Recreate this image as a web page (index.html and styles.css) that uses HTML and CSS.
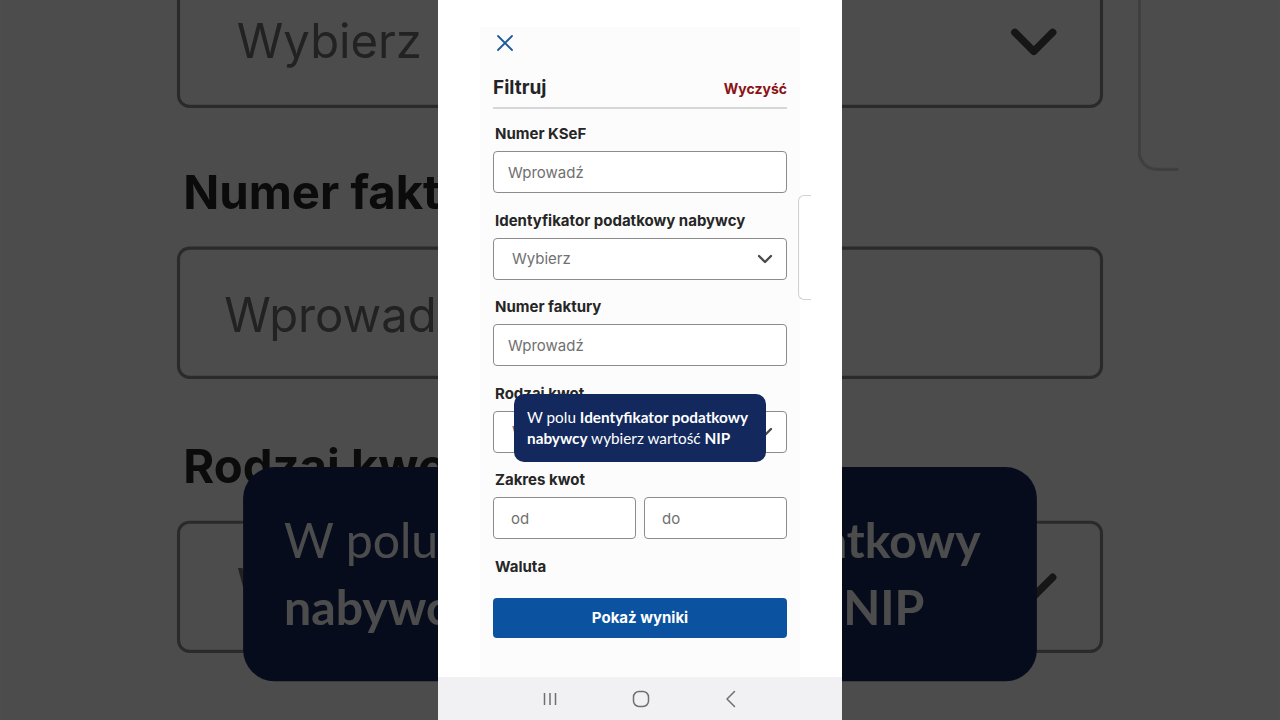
FILE: index.html
```html
<!DOCTYPE html>
<html lang="pl">
<head>
    <meta charset="UTF-8">
    <meta name="viewport" content="width=device-width, initial-scale=1.0">
    <title>Filtruj faktury</title>
    <link rel="stylesheet" href="styles.css">
</head>
<body>
    <!-- enlarged, dimmed copy of the phone screen behind it -->
    <div class="backdrop" id="backdrop" aria-hidden="true"></div>

    <div class="phone" id="phone">
        <div class="edge"></div>
        <div class="sheet">
            <button class="close-btn" type="button" aria-label="Zamknij">
                <svg width="16" height="16" viewBox="0 0 16 16">
                    <path d="M1 1 L15 15 M15 1 L1 15" stroke="#1d5c9b" stroke-width="1.8" stroke-linecap="round" fill="none"/>
                </svg>
            </button>

            <div class="sheet-header">
                <div class="sheet-title">Filtruj</div>
                <a href="#" class="clear-link">Wyczyść</a>
            </div>

            <form class="filters" onsubmit="return false">
                <div class="field">
                    <label>Numer KSeF</label>
                    <input type="text" placeholder="Wprowadź">
                </div>
                <div class="field">
                    <label>Identyfikator podatkowy nabywcy</label>
                    <div class="select">
                        <span>Wybierz</span>
                        <svg width="16" height="10" viewBox="0 0 16 10">
                            <path d="M2 2 L8 8 L14 2" stroke="#4a4a4a" stroke-width="2.4" stroke-linecap="round" stroke-linejoin="round" fill="none"/>
                        </svg>
                    </div>
                </div>
                <div class="field">
                    <label>Numer faktury</label>
                    <input type="text" placeholder="Wprowadź">
                </div>
                <div class="field">
                    <label>Rodzaj kwot</label>
                    <div class="select">
                        <span>Wybierz</span>
                        <svg width="16" height="10" viewBox="0 0 16 10">
                            <path d="M2 2 L8 8 L14 2" stroke="#4a4a4a" stroke-width="2.4" stroke-linecap="round" stroke-linejoin="round" fill="none"/>
                        </svg>
                    </div>
                    <div class="hint">
                        W polu <b>Identyfikator podatkowy</b><br>
                        <b>nabywcy</b> wybierz wartość <b>NIP</b>
                    </div>
                </div>
                <div class="field">
                    <label>Zakres kwot</label>
                    <div class="range">
                        <input type="text" placeholder="od">
                        <input type="text" placeholder="do">
                    </div>
                </div>
                <div class="field field-bare">
                    <label>Waluta</label>
                </div>
                <button class="show-btn" type="submit">Pokaż wyniki</button>
            </form>
        </div>

        <div class="system-nav">
            <svg width="16" height="16" viewBox="0 0 16 16">
                <path d="M2.5 2 V14 M8 2 V14 M13.5 2 V14" stroke="#6f6f6f" stroke-width="1.5" fill="none"/>
            </svg>
            <svg width="18" height="18" viewBox="0 0 18 18">
                <rect x="1.5" y="1.5" width="15" height="15" rx="5.5" stroke="#6f6f6f" stroke-width="1.5" fill="none"/>
            </svg>
            <svg width="14" height="18" viewBox="0 0 14 18">
                <path d="M10.5 1.5 L3 9 L10.5 16.5" stroke="#6f6f6f" stroke-width="1.5" stroke-linecap="round" stroke-linejoin="round" fill="none"/>
            </svg>
        </div>
    </div>

    <script>
        const copy = document.getElementById('phone').cloneNode(true);
        copy.removeAttribute('id');
        document.getElementById('backdrop').appendChild(copy);
    </script>
</body>
</html>
```
FILE: styles.css
```css
body {
    margin: 0;
    height: 100vh;
    overflow: hidden;
    background: #4d4d4d;
    font-family: Inter, "DejaVu Sans", sans-serif;
    color: #262626;
    display: flex;
    justify-content: center;
}
.backdrop {
    position: fixed;
    inset: 0;
    display: flex;
    justify-content: center;
    transform: scale(3.15);
    filter: brightness(0.3);
    pointer-events: none;
}
.phone {
    position: relative;
    width: 404px;
    height: 720px;
    flex-shrink: 0;
    background: #ffffff;
    display: flex;
    flex-direction: column;
}
.edge {
    position: absolute;
    left: 360px;
    top: 195px;
    width: 12px;
    height: 103px;
    border: 1px solid #d2d2d2;
    border-right: none;
    border-radius: 6px 0 0 6px;
}
.sheet {
    flex: 1;
    margin: 27px 42px 0;
    padding: 4px 13px 0;
    background: #fcfcfc;
    display: flex;
    flex-direction: column;
}
.close-btn {
    width: 24px;
    height: 24px;
    padding: 0;
    border: none;
    background: none;
    display: flex;
    align-items: center;
    justify-content: center;
    cursor: pointer;
}
.sheet-header {
    margin-top: 12px;
    height: 40px;
    display: flex;
    align-items: center;
    justify-content: space-between;
    border-bottom: 2px solid #d6d6d6;
}
.sheet-title {
    font-size: 19px;
    font-weight: 700;
    color: #242424;
}
.clear-link {
    margin-top: 3px;
    font-size: 14px;
    font-weight: 700;
    color: #8b1216;
    text-decoration: none;
}
.filters {
    padding-top: 15px;
    display: flex;
    flex-direction: column;
}
.field {
    position: relative;
    margin-bottom: 17.5px;
    display: flex;
    flex-direction: column;
}
.field label {
    height: 20px;
    line-height: 20px;
    margin: 0 0 7px 2px;
    font-size: 15px;
    font-weight: 700;
    color: #262626;
}
.field-bare {
    margin-bottom: 0;
}
.field-bare label {
    margin-bottom: 0;
}
input {
    box-sizing: border-box;
    height: 42px;
    width: 100%;
    padding: 0 14px;
    border: 1px solid #8c8c8c;
    border-radius: 4px;
    background: #ffffff;
    font-family: inherit;
    font-size: 15px;
    outline: none;
}
input::placeholder {
    color: #707070;
}
.select {
    box-sizing: border-box;
    height: 42px;
    padding: 0 13px 0 18px;
    border: 1px solid #8c8c8c;
    border-radius: 4px;
    background: #ffffff;
    display: flex;
    align-items: center;
    justify-content: space-between;
    font-size: 15px;
    color: #707070;
}
.range {
    display: flex;
    gap: 8px;
}
.range input {
    padding: 0 17px;
}
.hint {
    position: absolute;
    top: 10.5px;
    left: 21px;
    width: 252px;
    box-sizing: border-box;
    padding: 13px 13px;
    border-radius: 10px;
    background: #13295e;
    color: #ffffff;
    font-family: Lato, "Open Sans", sans-serif;
    font-size: 15.3px;
    line-height: 21px;
    white-space: nowrap;
}
.show-btn {
    margin-top: 21px;
    height: 40px;
    border: none;
    border-radius: 4px;
    background: #0b53a0;
    color: #ffffff;
    font-family: inherit;
    font-size: 15px;
    font-weight: 700;
    cursor: pointer;
}
.system-nav {
    height: 43px;
    background: #f1f1f3;
    display: flex;
    align-items: center;
    justify-content: center;
    gap: 74px;
}
```
